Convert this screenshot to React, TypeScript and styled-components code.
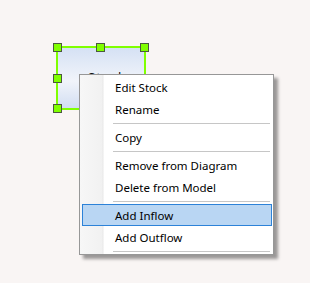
import styled, { createGlobalStyle } from "styled-components";

const GlobalStyle = createGlobalStyle`
  html, body {
    margin: 0;
    padding: 0;
    background: #f9f5f4;
  }
`;

const Canvas = styled.div`
  position: relative;
  width: 310px;
  height: 283px;
  overflow: hidden;
  background: #f9f5f4;
  font-family: "Noto Sans", "DejaVu Sans", sans-serif;
`;

// stock node on the diagram canvas
const StockNode = styled.div`
  position: absolute;
  left: 56px;
  top: 46px;
  width: 90px;
  height: 64px;
  box-sizing: border-box;
  border: 2px solid #80ff00;
  background: linear-gradient(#d5e1f4, #f1f4fa 55%, #d2def2);
  display: flex;
  justify-content: center;
  padding: 21px 0 0 12px;
  font-size: 13px;
  line-height: 16px;
  letter-spacing: 1px;
  color: #111;
`;

const Handle = styled.div<{ $x: number; $y: number }>`
  position: absolute;
  left: ${(p) => p.$x}px;
  top: ${(p) => p.$y}px;
  width: 9px;
  height: 9px;
  margin: -4px 0 0 -4px;
  box-sizing: border-box;
  border: 1px solid #4b5a3e;
  background: #80ff00;
`;

const Menu = styled.div`
  position: absolute;
  left: 79px;
  top: 74px;
  width: 195px;
  box-sizing: border-box;
  border: 1px solid #979797;
  padding: 1px 1px 0 1px;
  background: linear-gradient(
    to right,
    #f7f7f7 0,
    #f1f1f1 22px,
    #e8e8e8 23px,
    #ffffff 24px
  );
  box-shadow: 4px 4px 3px rgba(0, 0, 0, 0.38);
  display: flex;
  flex-direction: column;
`;

const Item = styled.div<{ $active?: boolean }>`
  height: 22px;
  box-sizing: border-box;
  display: flex;
  align-items: center;
  padding-left: 32px;
  margin-left: 1px;
  font-size: 11.5px;
  color: #000;
  border: 1px solid ${(p) => (p.$active ? "#2c82d8" : "transparent")};
  background: ${(p) => (p.$active ? "#b9d6f3" : "transparent")};
`;

const Separator = styled.div`
  height: 1px;
  margin: 3px 2px 2px 32px;
  background: #c6c6c6;
`;

const handles: [number, number][] = [
  [57, 47],
  [100, 47],
  [144, 47],
  [57, 78],
  [144, 78],
  [57, 108],
  [100, 108],
  [144, 108],
];

export default function App() {
  return (
    <Canvas>
      <GlobalStyle />
      <StockNode>Stock</StockNode>
      {handles.map(([x, y]) => (
        <Handle key={`${x}-${y}`} $x={x} $y={y} />
      ))}
      <Menu>
        <Item>Edit Stock</Item>
        <Item>Rename</Item>
        <Separator />
        <Item>Copy</Item>
        <Separator />
        <Item>Remove from Diagram</Item>
        <Item>Delete from Model</Item>
        <Separator />
        <Item $active>Add Inflow</Item>
        <Item>Add Outflow</Item>
        <Separator />
      </Menu>
    </Canvas>
  );
}
